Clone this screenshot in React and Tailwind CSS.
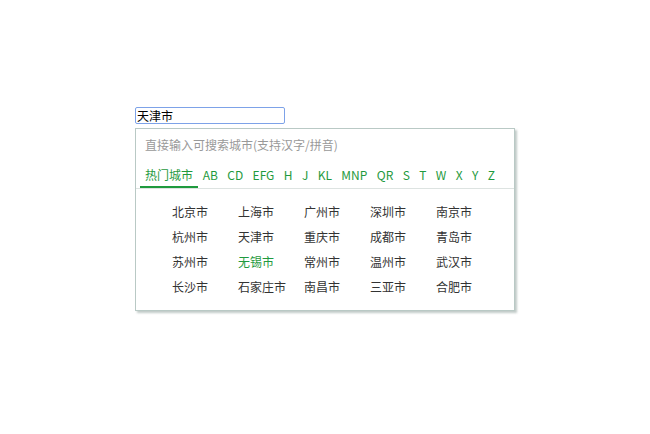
import { useState } from 'react';

const TABS = ['热门城市', 'AB', 'CD', 'EFG', 'H', 'J', 'KL', 'MNP', 'QR', 'S', 'T', 'W', 'X', 'Y', 'Z'];

const CITIES = [
  '北京市', '上海市', '广州市', '深圳市', '南京市',
  '杭州市', '天津市', '重庆市', '成都市', '青岛市',
  '苏州市', '无锡市', '常州市', '温州市', '武汉市',
  '长沙市', '石家庄市', '南昌市', '三亚市', '合肥市',
];

export default function App() {
  const [active, setActive] = useState('热门城市');
  const [value, setValue] = useState('天津市');

  return (
    <div
      className="w-[650px] h-[434px] bg-white pt-[107px] pl-[135px]"
      style={{ fontFamily: '"Noto Sans CJK SC", "Liberation Sans", sans-serif' }}
    >
      <input
        value={value}
        onChange={(e) => setValue(e.target.value)}
        className="block w-[150px] h-[17px] border border-[#7da2e8] rounded-[2px] px-[1px] text-[12px] leading-[15px] text-black outline-none"
      />

      <div className="mt-[4px] w-[380px] border border-[#b9c9c5] bg-white shadow-[2px_2px_2px_rgba(120,140,135,0.45)]">
        <div className="pl-[9px] pt-[8px] h-[32px] text-[12px] leading-[16px] text-[#999]">
          直接输入可搜索城市(支持汉字/拼音)
        </div>

        <div className="flex px-[4px] pt-[3px] border-b border-[#dde3e1]">
          {TABS.map((t) => (
            <button
              key={t}
              onClick={() => setActive(t)}
              className={`px-[4.7px] h-[24px] text-[12px] leading-[22px] text-[#1f9a3e] border-b-2 ${
                t === active ? 'border-[#1f9a3e] px-[5px]' : 'border-transparent'
              }`}
            >
              {t}
            </button>
          ))}
        </div>

        <div className="grid grid-cols-[repeat(5,66px)] pl-[36px] pt-[10px] pb-[11px]">
          {CITIES.map((c) => (
            <div
              key={c}
              className={`h-[25px] text-[12px] leading-[25px] ${c === '无锡市' ? 'text-[#1f9a3e]' : 'text-[#333]'}`}
            >
              {c}
            </div>
          ))}
        </div>
      </div>
    </div>
  );
}
